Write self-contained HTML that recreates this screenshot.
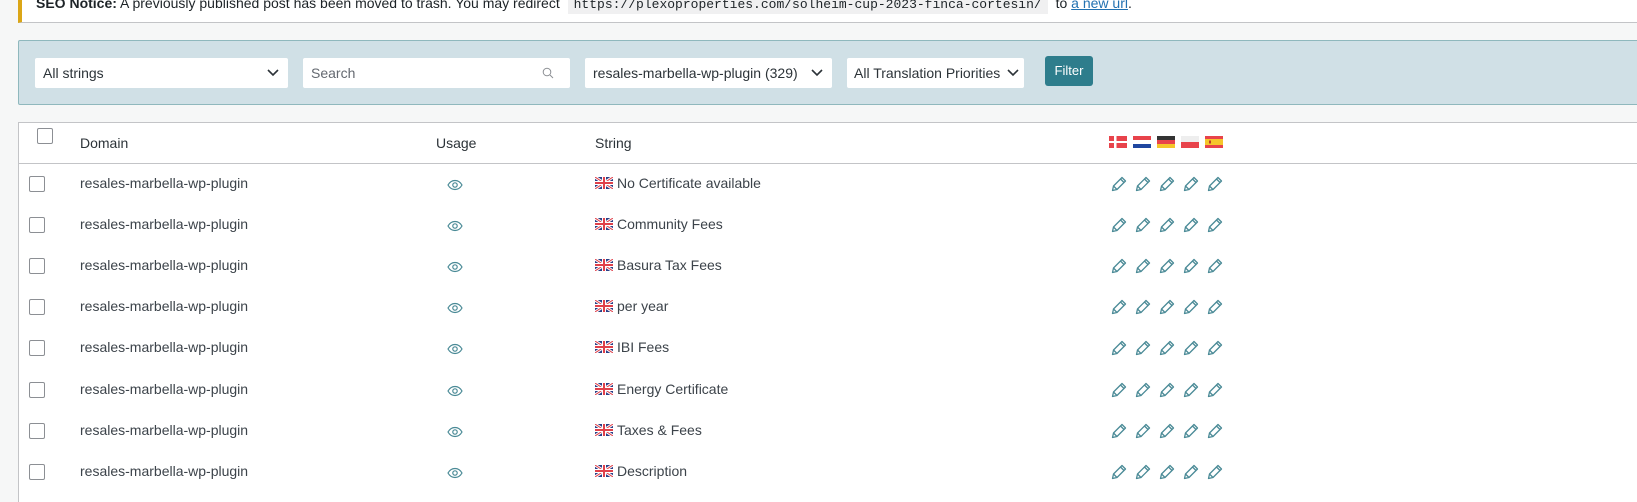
<!DOCTYPE html>
<html><head><meta charset="utf-8"><style>
*{box-sizing:border-box;margin:0;padding:0}
body{width:1637px;height:491px;overflow:hidden;background:#f6f7f7;font-family:"Liberation Sans",sans-serif;font-size:14px;color:#3c434a;position:relative}
.notice{position:absolute;left:18px;top:-10px;width:1640px;height:33px;background:#fff;border-left:4px solid #dba617;border-bottom:1px solid #c3c4c7}
.notice p{position:absolute;left:14px;top:5px;white-space:nowrap;font-size:14px;color:#1d2327}
.notice code{font-family:"Liberation Mono",monospace;background:#f0f0f1;padding:2px 6px;font-size:13px;margin:0 4px}
.notice a{color:#2271b1}
.panel{position:absolute;left:18px;top:40px;width:1640px;height:65px;background:#d0e0e6;border:1px solid #8fb8bd;border-radius:2px}
.sel{position:absolute;top:58px;height:30px;background:#fff;border-radius:2px;font-size:14px;color:#2c3338;line-height:30px;padding-left:8px}
.sel svg{position:absolute;right:9px;top:11px}
.btn{position:absolute;left:1045px;top:56px;width:48px;height:30px;background:#2e7d8c;border-radius:3px;color:#fff;font-size:13px;line-height:30px;text-align:center}
.table{position:absolute;left:18px;top:122px;width:1640px;height:380px;background:#fff;border-top:1px solid #c3c4c7;border-left:1px solid #c3c4c7}
.hdr{position:absolute;left:0;top:0;width:100%;height:41px;border-bottom:1px solid #c3c4c7}
.cb{position:absolute;width:16px;height:16px;border:1px solid #8c8f94;border-radius:2px;background:#fff}
.t{position:absolute;white-space:nowrap}
.flag{position:absolute;width:18px;height:12px;top:13px}
.row{position:absolute;left:0;width:100%;height:41px}
</style></head><body>
<div class="notice"><p><b>SEO Notice:</b> A previously published post has been moved to trash. You may redirect <code>https://plexoproperties.com/solheim-cup-2023-finca-cortesin/</code> to <a href="#">a new url</a>.</p></div>
<div class="panel"></div>
<div class="sel" style="left:35px;width:253px">All strings<svg width="12" height="8"><path d="M1 1l5 5 5-5" stroke="#2c3338" stroke-width="1.6" fill="none"/></svg></div>
<div class="sel" style="left:303px;width:267px;color:#646970">Search<svg width="12" height="12" style="top:9px;right:16px"><circle cx="5" cy="5" r="3.8" stroke="#8c8f94" fill="none"/><path d="M8 8l3 3" stroke="#8c8f94"/></svg></div>
<div class="sel" style="left:585px;width:247px">resales-marbella-wp-plugin (329)<svg width="12" height="8"><path d="M1 1l5 5 5-5" stroke="#2c3338" stroke-width="1.6" fill="none"/></svg></div>
<div class="sel" style="left:847px;width:177px;padding-left:7px">All Translation Priorities<svg width="12" height="8" style="right:5px"><path d="M1 1l5 5 5-5" stroke="#2c3338" stroke-width="1.6" fill="none"/></svg></div>
<div class="btn">Filter</div>
<div class="table">
<div class="hdr">
<div class="cb" style="left:18px;top:5px"></div>
<div class="t" style="left:61px;top:12px;color:#2c3338">Domain</div>
<div class="t" style="left:417px;top:12px;color:#2c3338">Usage</div>
<div class="t" style="left:576px;top:12px;color:#2c3338">String</div>
<svg class="flag" style="left:1090px" viewBox="0 0 18 12"><rect width="18" height="12" fill="#e8434b"/><rect x="5" width="2.5" height="12" fill="#fff"/><rect y="5" width="18" height="2" fill="#fff"/></svg>
<svg class="flag" style="left:1114px" viewBox="0 0 18 12"><rect width="18" height="4" fill="#e8434b"/><rect y="4" width="18" height="4" fill="#fff"/><rect y="8" width="18" height="4" fill="#1f47a0"/></svg>
<svg class="flag" style="left:1138px" viewBox="0 0 18 12"><rect width="18" height="4" fill="#333"/><rect y="4" width="18" height="4" fill="#e8434b"/><rect y="8" width="18" height="4" fill="#f5c62b"/></svg>
<svg class="flag" style="left:1162px" viewBox="0 0 18 12"><rect width="18" height="6" fill="#eee"/><rect y="6" width="18" height="6" fill="#e8434b"/></svg>
<svg class="flag" style="left:1186px" viewBox="0 0 18 12"><rect width="18" height="12" fill="#e8434b"/><rect y="3" width="18" height="6" fill="#f5c62b"/><rect x="4" y="4.5" width="2" height="3" fill="#c0392b"/></svg>
</div>
<div id="rows"></div>
</div>
<script>
var s=["No Certificate available","Community Fees","Basura Tax Fees","per year","IBI Fees","Energy Certificate","Taxes &amp; Fees","Description"],h="";
var uk='<svg width="18" height="12" viewBox="0 0 18 12" style="position:absolute;left:576px;top:13px"><rect width="18" height="12" fill="#2b3f86"/><path d="M0 0L18 12M18 0L0 12" stroke="#fff" stroke-width="3"/><path d="M0 0L18 12M18 0L0 12" stroke="#e0404a" stroke-width="1"/><path d="M9 0V12M0 6H18" stroke="#fff" stroke-width="4"/><path d="M9 0V12M0 6H18" stroke="#e0404a" stroke-width="2"/></svg>';
var pen='<path d="M1.5 15.5l1-4.5 8.5-8.5 3.5 3.5-8.5 8.5z M9.5 4l3.5 3.5 M2.5 11l3.5 3.5" stroke="#4a8a96" stroke-width="1.3" fill="none" stroke-linejoin="round"/>';
var eye='<svg width="16" height="12" viewBox="0 0 16 12" style="position:absolute;left:428px;top:15px"><path d="M1 6C3 2.5 5.5 1.5 8 1.5S13 2.5 15 6C13 9.5 10.5 10.5 8 10.5S3 9.5 1 6z" stroke="#4a8a96" stroke-width="1.2" fill="none"/><circle cx="8" cy="6" r="2.2" stroke="#4a8a96" stroke-width="1.2" fill="none"/></svg>';
for(var i=0;i<8;i++){var ry=41+i*41.1;h+='<div class="row" style="top:'+ry+'px">'+
'<div class="cb" style="left:10px;top:12px"></div><div class="t" style="left:61px;top:11px">resales-marbella-wp-plugin</div>'+eye+uk+
'<div class="t" style="left:598px;top:11px">'+s[i]+'</div>';
for(var j=0;j<5;j++)h+='<svg width="17" height="17" viewBox="0 0 17 17" style="position:absolute;left:'+(1092+j*24)+'px;top:11px">'+pen+'</svg>';
h+='</div>';}
document.getElementById('rows').innerHTML=h;
</script>
</body></html>
